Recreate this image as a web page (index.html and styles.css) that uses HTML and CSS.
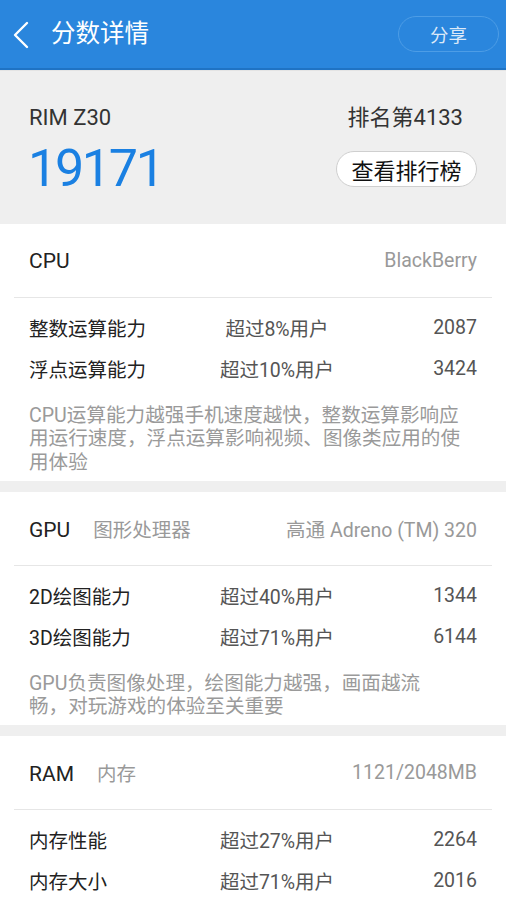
FILE: index.html
```html
<!DOCTYPE html>
<html lang="zh-CN">
<head>
<meta charset="utf-8">
<title>分数详情</title>
<link rel="stylesheet" href="styles.css">
</head>
<body>
<header class="topbar">
  <svg class="back" width="18" height="28" viewBox="0 0 18 28"><path d="M15 2 L3 14 L15 26" fill="none" stroke="#fff" stroke-width="2.4" stroke-linecap="round" stroke-linejoin="round"/></svg>
  <h1 class="title">分数详情</h1>
  <button class="share">分享</button>
</header>

<section class="summary">
  <div class="sum-row">
    <span class="device">RIM Z30</span>
    <span class="rank">排名第4133</span>
  </div>
  <div class="sum-row second">
    <span class="score">19171</span>
    <button class="board">查看排行榜</button>
  </div>
</section>

<section class="card">
  <div class="card-head">
    <span class="head-name">CPU</span>
    <span class="head-value">BlackBerry</span>
  </div>
  <div class="divider"></div>
  <div class="rows">
    <div class="row"><span class="label">整数运算能力</span><span class="pct">超过8%用户</span><span class="val">2087</span></div>
    <div class="row"><span class="label">浮点运算能力</span><span class="pct">超过10%用户</span><span class="val">3424</span></div>
  </div>
  <p class="desc">CPU运算能力越强手机速度越快，整数运算影响应<br>用运行速度，浮点运算影响视频、图像类应用的使<br>用体验</p>
</section>

<section class="card">
  <div class="card-head">
    <span class="head-name">GPU<span class="head-sub">图形处理器</span></span>
    <span class="head-value">高通 Adreno (TM) 320</span>
  </div>
  <div class="divider"></div>
  <div class="rows">
    <div class="row"><span class="label">2D绘图能力</span><span class="pct">超过40%用户</span><span class="val">1344</span></div>
    <div class="row"><span class="label">3D绘图能力</span><span class="pct">超过71%用户</span><span class="val">6144</span></div>
  </div>
  <p class="desc">GPU负责图像处理，绘图能力越强，画面越流<br>畅，对玩游戏的体验至关重要</p>
</section>

<section class="card">
  <div class="card-head">
    <span class="head-name">RAM<span class="head-sub">内存</span></span>
    <span class="head-value">1121/2048MB</span>
  </div>
  <div class="divider"></div>
  <div class="rows">
    <div class="row"><span class="label">内存性能</span><span class="pct">超过27%用户</span><span class="val">2264</span></div>
    <div class="row"><span class="label">内存大小</span><span class="pct">超过71%用户</span><span class="val">2016</span></div>
  </div>
</section>
</body>
</html>
```

FILE: styles.css
```css
* { box-sizing: border-box; }
html, body {
  margin: 0;
  padding: 0;
}
body {
  background: #fff;
  font-family: Roboto, "Noto Sans CJK SC", sans-serif;
  color: #333;
}

.topbar {
  height: 70px;
  background: #2a86dd;
  border-bottom: 2px solid #1f73c4;
  display: flex;
  align-items: center;
  padding: 0 7px 0 12px;
}
.back {
  display: block;
  flex: none;
  margin-top: 1px;
}
.title {
  margin: 0 0 0 21px;
  font-size: 24.5px;
  font-weight: normal;
  color: #fff;
  flex: 1;
  line-height: 30px;
}
.share {
  width: 101px;
  height: 36px;
  border-radius: 18px;
  border: 1px solid #4d9de6;
  background: #2a86dd;
  color: #dbe9f8;
  font-family: Roboto, "Noto Sans CJK SC", sans-serif;
  font-size: 18.5px;
  padding: 0;
  margin-top: -1px;
}

.summary {
  background: #efefef;
  border-top: 1px solid #e4e4e4;
  padding: 32px 29px 37px 29px;
  height: 154px;
}
.sum-row {
  display: flex;
  justify-content: space-between;
  align-items: center;
  height: 30px;
}
.device, .rank {
  font-size: 22px;
  color: #333;
  line-height: 30px;
}
.rank { margin-right: 14px; }
.sum-row.second {
  margin-top: 18px;
  height: 36px;
}
.score {
  font-size: 52px;
  letter-spacing: -2.3px;
  line-height: 36px;
  color: #1a80e2;
  margin-left: -1px;
}
.board {
  width: 141px;
  height: 36px;
  border-radius: 18px;
  border: 1px solid #cfcfcf;
  background: #fff;
  color: #111;
  font-family: Roboto, "Noto Sans CJK SC", sans-serif;
  font-size: 22px;
  padding: 0;
}

.card {
  border-bottom: 11px solid #efefef;
}
.card-head {
  height: 73px;
  padding: 0 29px;
  display: flex;
  justify-content: space-between;
  align-items: center;
}
.head-name {
  font-size: 21px;
  color: #222;
}
.head-sub {
  font-size: 19.5px;
  color: #999;
  margin-left: 23px;
}
.head-value {
  font-size: 19.5px;
  color: #999;
}
.divider {
  height: 1px;
  background: #e6e6e6;
  margin: 0 14px;
}
.rows {
  padding: 9px 29px 0 29px;
}
.row {
  height: 41px;
  display: grid;
  grid-template-columns: 166px 164px 1fr;
  align-items: center;
  font-size: 19.5px;
}
.label { color: #222; }
.pct { color: #555; text-align: center; white-space: nowrap; }
.val { color: #555; text-align: right; }
.desc {
  margin: 0;
  padding: 15px 29px 7px 29px;
  font-size: 19.6px;
  line-height: 23.3px;
  color: #9a9a9a;
}
```
